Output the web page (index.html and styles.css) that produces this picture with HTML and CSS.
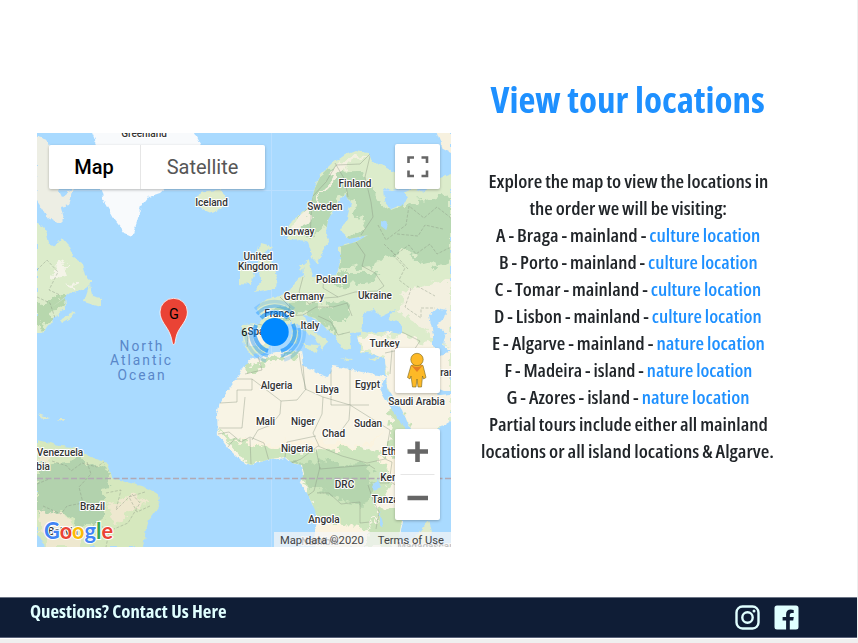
FILE: index.html
```html
<!DOCTYPE html>
<html lang="en">
<head>
<meta charset="utf-8">
<title>View tour locations</title>
<link rel="stylesheet" href="styles.css">
</head>
<body>
<div class="page">
<main class="tour">
<section class="map">
<svg class="world" viewBox="37 133 414 414">
<defs>
<filter id="coast" x="-5%" y="-5%" width="110%" height="110%"><feTurbulence type="fractalNoise" baseFrequency=".16" numOctaves="3" seed="4"/><feDisplacementMap in="SourceGraphic" scale="5" xChannelSelector="R" yChannelSelector="G"/></filter>
<filter id="soft" x="-20%" y="-20%" width="140%" height="140%"><feTurbulence type="fractalNoise" baseFrequency=".12" numOctaves="3" seed="9" result="n"/><feDisplacementMap in="SourceGraphic" in2="n" scale="16" xChannelSelector="R" yChannelSelector="G"/><feGaussianBlur stdDeviation=".7"/></filter>
<clipPath id="land">
<path id="eurasia" d="M288 240L287 229L293 220L303 213L311 203L315 188L321 175L333 163L345 155L355 151L369 153L372 162L383 166L398 174L403 187L392 190L383 187L384 201L391 210L401 206L408 199L404 192L413 188L424 192L440 178L451 174V425L432 434L412 431L402 410L387 387L385 359L373 354L361 352L357 336L362 332L350 333L351 349L342 348L335 336L315 318L304 315L310 328L328 342L322 350L315 337L302 329L294 320L281 329L270 345L262 354L252 355L244 347L242 325L259 324L262 316L257 307L267 299L280 297L290 290L297 279L304 276L303 265L309 260L313 277L336 275L341 261L338 247L356 242L368 235L349 239L340 231L347 218L351 203L345 195L336 205L328 220L326 232L329 240L322 252L318 264L312 258L307 243L300 239Z"/>
<path id="africa" d="M253 358L243 367L237 378L220 402L217 415L218 435L228 448L241 461L251 465L270 459L285 457L292 463L302 465L304 474L300 482L307 493L315 510L317 522L312 547H397L403 515L411 490L425 470L438 438L425 436L408 430L381 388L385 376L370 374L345 368L333 366L328 377L318 373L303 365L301 350L276 353Z"/>
<path id="southam" d="M37 440L47 442L60 446L75 447L92 458L108 463L112 477L125 482L145 487L158 494L160 505L149 520L146 530L143 547H45L37 531Z"/>
<path id="northam" d="M37 222L45 230L48 243L55 247L62 238L68 245L74 258L82 263L85 275L92 282L85 289L70 293L60 301L52 307L65 298L66 307L56 316L43 333H37Z"/>
</clipPath>
</defs>
<rect x="37" y="133" width="414" height="414" fill="#a9daff"/>
<path class="grid" d="M271.5 133V547M37 190.5H451"/>
<g filter="url(#coast)">
<path fill="#f8fafc" d="M91 130H194L201 144L193 165L177 178L160 193L148 197L141 206L137 222L132 236L125 233L114 219L104 202L100 185L98 148Z"/>
<path fill="#edeee4" d="M35 136L47 140L53 160L53 179L62 197L74 188L69 205L61 207L64 219L59 224L47 216L37 201Z"/>
<path fill="#edeee4" d="M41 207L50 214L58 223L48 218Z"/>
<path fill="#e1edcc" d="M195 196L207 191L219 190L228 198L222 209L212 213L201 208Z"/>
<g fill="#dceccb"><use href="#eurasia"/><use href="#northam"/><path d="M90 284L84 302L101 307L101 298L92 296ZM60 320L76 311L71 318L62 323Z"/><path d="M261 243L272 246L264 253L270 259L278 277L275 288L254 292L262 281L257 270ZM240 269L252 264L255 276L250 285L240 284ZM255 261L258 247L265 259Z"/><path d="M301 344L319 345L315 354ZM292 329L299 332L297 344L291 343ZM292 319L298 320L296 328L292 326ZM340 358L352 359L349 361ZM369 359L380 356L375 361ZM298 265L304 265L302 271Z"/></g>
<use href="#africa" fill="#f8f4e5"/><use href="#southam" fill="#d6e8be"/>
<path fill="#dfeacb" d="M38 414L50 418L44 420ZM56 419L65 419L64 421ZM405 547L417 534L429 520L432 532L425 547Z"/>
<path fill="#f7f1df" d="M436 130L451 130V153L443 149Z"/>
</g>
<g clip-path="url(#land)">
<g filter="url(#soft)">
<path fill="#b7d8b2" d="M290 197L325 170L355 169L370 182L385 209L451 195V258L430 268L404 249L370 266L340 270V240L365 230L345 191L325 225L307 240Z"/>
<path fill="#f3f0e0" d="M292 222L313 205L340 161L370 153L348 165L326 188L309 216L301 238ZM405 290L451 279V350L435 340L417 323L400 310Z"/>
<path fill="#f8f3e4" d="M357 339L390 334L413 339L451 349V430H412L386 395L385 355L363 351ZM251 325L272 333L260 349L246 343Z"/>
<path fill="#b8d9b3" d="M270 310L290 303L307 302L333 310L327 300L350 305L347 318L330 318L340 335L319 323L300 312L282 321ZM318 282L357 285L378 280L380 272L345 272Z"/>
<path fill="#cce5bd" d="M217 430L242 440L265 446L315 450L350 445L392 456L391 482L378 505L370 530L325 524L310 503L301 477L287 459L250 466Z"/>
<path fill="#b5d5ae" d="M292 464L317 460L340 464L369 463L374 481L366 505L345 503L328 493L308 486Z"/>
<path fill="#fbf3df" d="M217 438L274 444L309 440L361 445L386 430L370 445L329 450L302 447L270 448ZM315 523L360 526L365 547H309ZM380 454L412 450L420 483L393 482Z"/>
<path fill="#c8e2b9" d="M244 367L277 355L300 352L297 358L277 359L247 374ZM393 402L423 446L404 466L388 454ZM378 510L412 505L399 547H365Z"/>
<path fill="#b2d2ad" d="M37 463L78 459L112 471L103 494L104 518L79 529L63 511L37 516Z"/>
<path fill="#eee8cf" d="M61 512L76 530L82 547H47L37 510ZM37 449L58 451L42 466ZM107 506L135 494L147 502L132 512L116 525Z"/>
<path fill="#b7d7ad" d="M37 305L64 295L80 293L60 305L40 330L37 325Z"/>
<path fill="#f4f4e8" d="M51 267L64 261L67 278L55 281ZM65 285L77 283L76 291Z"/>
</g>
<path class="borders" d="M310 239L312 197L326 182L336 165L360 164L371 153M348 197L345 180L335 163M371 152L365 177L371 202L373 217L361 235M356 242L365 255L362 266L375 273L384 286L377 291L355 292L338 297L323 288L324 276M303 277L299 292L309 304L324 298L338 297M279 296L290 307L286 316L291 321M286 316L303 315L316 307L333 307L347 303L352 316M318 316L331 322L338 335L350 332M258 324L280 330M249 327L247 347M385 353L399 350L414 350L420 341L400 331M390 374L392 350M258 356L262 370L245 374M237 379L252 379V390H237V402L220 403M252 379L281 401L297 400L306 389L302 373L299 353M303 365L305 389L323 397L350 405V369M331 367V405H369M350 406L349 420L340 432M323 397L322 414L313 433L319 446M281 401L280 414L271 425L258 430L252 440M219 428H242L245 397M218 434L229 432L241 442L250 437L264 443L269 461M228 447L235 438M250 438L251 464M285 457L287 442L316 436M291 463L301 459L318 446L342 456L367 463L385 459L390 430L350 405M316 449L320 469L332 468L369 465L375 469M320 467L314 491L307 496M317 493L329 493L341 504L360 502V523L370 522M368 485L373 500L379 512L376 529M385 459L392 462L389 483L374 483M389 481L409 493"/>
<path class="borders fine" d="M378 225L386 240L406 225L409 206L424 218L437 207L451 218M384 244L395 255L409 245L416 254L430 244L437 254L451 247M397 234L418 236L425 225L443 229M393 255L405 268L399 280L411 289L405 307L421 318L421 308L435 308M37 270L47 260L58 272L49 290L60 295M37 297L50 303L56 321M52 461L67 466L71 471L82 463L97 467L105 461M87 462L91 474L79 487L83 503L67 506L61 514L43 506M37 484L49 479M106 493L121 490L116 510L132 494L140 503L128 523L114 529M145 492L129 497L137 512L150 506M76 528L86 535L96 522L109 532L106 547M391 250L408 269M417 286L435 296"/>
</g>
<g fill="#a9daff" filter="url(#coast)"><path d="M361 331L364 313L374 309L380 317L395 310L389 318L402 325L402 333L388 331L373 334ZM429 315L437 308L446 310L444 318L437 325L446 333L443 345L450 351L441 355L433 347L433 334ZM376 382L386 394L396 409L411 430L409 432L397 418ZM425 381L433 386L445 391L451 391V394L439 395ZM426 436L451 421V470H420ZM372 484L378 480L381 487L375 490ZM380 511L383 525L380 526ZM381 221L388 223L386 230L381 226Z"/></g>
<path class="equator" d="M37 478.5H451"/>
<g class="labels">
<text x="144" y="137">Greenland</text><text x="211.500" y="206">Iceland</text><text x="355" y="186.500">Finland</text><text x="325" y="210">Sweden</text><text x="297.500" y="234.500">Norway</text><text x="258" y="259.500">United</text><text x="258" y="270">Kingdom</text><text x="331.500" y="282.500">Poland</text><text x="304" y="299.500">Germany</text><text x="375" y="298.500">Ukraine</text><text x="279.500" y="316.500">France</text><text x="310" y="328.500">Italy</text><text x="260" y="335">Spain</text><text x="384.500" y="347">Turkey</text><text x="276.500" y="388.500">Algeria</text><text x="327" y="392.500">Libya</text><text x="367.500" y="388">Egypt</text><text x="416.500" y="405">Saudi Arabia</text><text x="446" y="376">Iran</text><text x="265.500" y="424.500">Mali</text><text x="303" y="425">Niger</text><text x="368" y="427">Sudan</text><text x="333.500" y="437">Chad</text><text x="297" y="452">Nigeria</text><text x="400" y="455">Ethiopia</text><text x="394" y="481">Kenya</text><text x="344.500" y="487.500">DRC</text><text x="392" y="502.500">Tanzania</text><text x="324" y="522.500">Angola</text><text x="60" y="456">Venezuela</text><text x="28.500" y="470">Colombia</text><text x="92.500" y="510">Brazil</text><text x="63" y="535">Bolivia</text><text x="320" y="545">Namibia</text><text x="425" y="550">Madagascar</text>
</g>
<g class="ocean"><text x="142" y="350.500">North</text><text x="141.500" y="365">Atlantic</text><text x="142" y="379.500">Ocean</text></g>
<g fill="none" stroke="#0088ff"><path stroke-width="4" stroke-opacity=".6" d="M268 351A19.500 19.500 0 0 1 256 325M293 324A19.500 19.500 0 0 1 281 351M261 318A19.500 19.500 0 0 1 288 318"/><path stroke-width="3.500" stroke-opacity=".38" d="M268 356A24 24 0 0 1 251 330M299 328A24 24 0 0 1 281 356M257 314A24 24 0 0 1 292 313"/><path stroke-width="3.500" stroke-opacity=".2" d="M266 361A29 29 0 0 1 246 333M304 328A29 29 0 0 1 284 360M255 309A29 29 0 0 1 294 309"/></g>
<circle cx="274.700" cy="332" r="14" fill="#0088ff"/>
<text class="count" x="244.300" y="336">6</text>
<path fill="#ea4335" stroke="#fff" stroke-width=".8" d="M173.700 344.500C171.900 344.500 172.500 340 170 334C167 326 160 321 160 312A13.700 13.700 0 0 1 187.400 312C187.400 321 180 326 177 334C174.900 340 175.500 344.500 173.700 344.500Z"/>
<text class="pin" x="173.900" y="318.500">G</text>
<g class="google"><text x="44" y="539" textLength="69" lengthAdjust="spacingAndGlyphs"><tspan fill="#4285f4">G</tspan><tspan fill="#ea4335">o</tspan><tspan fill="#fbbc05">o</tspan><tspan fill="#4285f4">g</tspan><tspan fill="#34a853">l</tspan><tspan fill="#ea4335">e</tspan></text></g>
</svg>
<div class="types"><button class="active">Map</button><button>Satellite</button></div>
<div class="control full"><svg viewBox="0 0 45 45"><path fill="none" stroke="#666" stroke-width="2.600" d="M13.500 19V13.500H19M26.500 13.500H32V19M32 26.500V32H26.500M19 32H13.500V26.500"/></svg></div>
<div class="control pegman"><svg viewBox="0 0 45 45"><g fill="#fdb927" stroke="#75651f" stroke-width=".6"><path d="M16 17.500Q22 14.500 28 17.500L31 29.500L28.500 31L27.500 28L26.500 39H23L22 31L21 39H17.500L16 28L15 31L12.500 29.500Z"/><circle cx="22" cy="11.500" r="6.200"/></g><path fill="#e57f24" d="M16 17Q22 21 28 17L22 24Z"/></svg></div>
<div class="control zoom"><svg viewBox="0 0 45 91"><path stroke="#666" stroke-width="4.600" d="M12.500 22.500H33M22.500 12.500V33M12.500 69H33"/><path stroke="#e6e6e6" d="M5.500 45.500H39.500"/></svg></div>
<div class="legal"><span>Map data ©2020</span><span>Terms of Use</span></div>
</section>
<section class="copy">
<h1><span data-width="274">View tour locations</span></h1>
<div class="list">
<p><span data-width="280">Explore the map to view the locations in</span></p>
<p><span data-width="198">the order we will be visiting:</span></p>
<p><span data-width="264">A - Braga - mainland - <b>culture location</b></span></p>
<p><span data-width="259">B - Porto - mainland - <b>culture location</b></span></p>
<p><span data-width="267">C - Tomar - mainland - <b>culture location</b></span></p>
<p><span data-width="268">D - Lisbon - mainland - <b>culture location</b></span></p>
<p><span data-width="273">E - Algarve - mainland - <b>nature location</b></span></p>
<p><span data-width="248">F - Madeira - island - <b>nature location</b></span></p>
<p><span data-width="243">G - Azores - island - <b>nature location</b></span></p>
<p><span data-width="279">Partial tours include either all mainland</span></p>
<p><span data-width="293">locations or all island locations &amp; Algarve.</span></p>
</div>
</section>
</main>
<footer>
<a class="contact"><span data-width="197">Questions? Contact Us Here</span></a>
<div class="social">
<svg viewBox="0 0 25 25"><g fill="none" stroke="#e0ffff" stroke-width="2.400"><rect x="1.500" y="1.500" width="22" height="22" rx="6"/><circle cx="12.500" cy="12.500" r="5.200"/></g><circle cx="19" cy="6" r="1.500" fill="#e0ffff"/></svg>
<svg viewBox="0 0 25 25"><path fill="#e0ffff" d="M3 .5H22Q24.500 .5 24.500 3V22Q24.500 24.500 22 24.500H15.800V15.500H19.200L19.800 12H15.800V9.800Q15.800 8 17.800 8H19.700V4.900Q12.100 3.300 12.100 9.300V12H8.600V15.500H12.100V24.500H3Q.5 24.500 .5 22V3Q.5 .5 3 .5Z"/></svg>
</div>
</footer>
</div>
<script src="fit.js"></script>
</body>
</html>
```
FILE: styles.css
```css
* { box-sizing: border-box; }
body { margin: 0; height: 643px; overflow: hidden; background: #efefef; font-family: "Open Sans", sans-serif; }
.page { width: 857px; height: 639px; background: #fff; }
.tour { display: flex; height: 597px; padding: 80px 0 0 37px; }
.map { position: relative; width: 414px; height: 414px; margin-top: 53px; overflow: hidden; font-family: Roboto, sans-serif; flex: none; }
.world { display: block; width: 414px; height: 414px; }
.grid { fill: none; stroke: #badfff; stroke-width: 1; }
.borders { fill: none; stroke: #8a9584; stroke-width: .65; opacity: .65; }
.fine { stroke-dasharray: 3 1.5; }
.equator { fill: none; stroke: #b2a9b3; stroke-width: 1.7; stroke-dasharray: 6 2.5; }
.labels { font-size: 10px; font-weight: 500; fill: #333; stroke: #fff; stroke-width: 2px; stroke-linejoin: round; paint-order: stroke; text-anchor: middle; }
.ocean { font-size: 13.8px; fill: #5987c9; letter-spacing: 2px; text-anchor: middle; }
.count { font-size: 11px; text-anchor: middle; }
.pin { font-size: 14.5px; text-anchor: middle; }
.google { font: 700 22px Lato, sans-serif; stroke: #fff; stroke-width: 2px; paint-order: stroke; }
.types { position: absolute; left: 12px; top: 12px; display: flex; width: 216px; height: 44px; box-shadow: 0 1px 3px #0004; border-radius: 2px; overflow: hidden; }
.types button { flex: 1; padding: 0 1px 0 0; border: 0; background: #fff; color: #565656; font: 20px Roboto, sans-serif; }
.types .active { flex: 0 0 92px; border-right: 1px solid #e6e6e6; color: #000; font-weight: 500; }
.control { position: absolute; left: 358px; width: 45px; height: 45px; background: #fff; border-radius: 2px; box-shadow: 0 1px 3px #0004; }
.control svg { display: block; width: 100%; height: 100%; }
.full { top: 11px; }
.pegman { top: 215px; }
.zoom { top: 296px; height: 91px; }
.legal { position: absolute; right: 0; bottom: 0; display: flex; justify-content: space-between; width: 177px; height: 15px; padding: 0 7px 0 6px; background: #f5f5f5bb; color: #444; font-size: 11.2px; line-height: 17px; white-space: nowrap; }
.copy { width: 354px; text-align: center; }
h1 { margin: 0; color: #1e90ff; font-size: 36px; font-weight: 700; line-height: 39px; }
.list { margin-top: 49px; }
p { margin: 0; height: 27px; color: #212529; font-size: 17px; font-weight: 600; line-height: 27px; word-spacing: -.5px; }
b { color: #1e90ff; font-weight: 600; }
h1, p { display: flex; justify-content: center; white-space: nowrap; }
[data-width] { display: inline-block; flex: none; white-space: nowrap; font-stretch: 75%; }
footer { display: flex; justify-content: space-between; height: 41px; padding: 0 58px 0 30px; border-top: 1px solid #6b7485; border-bottom: 1px solid #59627a; background: #0f1d36; }
.contact { color: #e0ffff; font-size: 17px; font-weight: 700; line-height: 27px; }
.contact span { transform-origin: left center; }
.social { display: flex; gap: 14px; padding-top: 7px; }
.social svg { width: 25px; height: 25px; }
```
FILE: fit.js
```js
document.querySelectorAll("[data-width]").forEach(function (line) {
  line.style.transform = "scaleX(" + line.dataset.width / line.offsetWidth + ")";
});
```
